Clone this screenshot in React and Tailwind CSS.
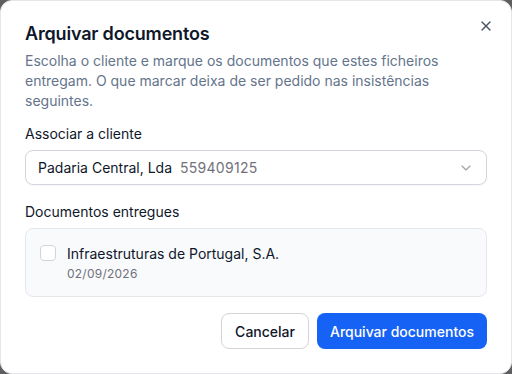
import { X, ChevronDown } from "lucide-react";

const App = () => {
  return (
    <div className="w-[512px] h-[374px] bg-[#5f5f5f] font-['Inter',sans-serif]">
      <div className="w-full h-full bg-white rounded-xl border border-[#e5e7eb] px-6 pt-[19px] relative">
        {/* Close */}
        <button className="absolute right-[17px] top-[17px] text-[#4b5563]">
          <X className="w-4 h-4" strokeWidth={2} />
        </button>

        {/* Header */}
        <h2 className="text-[18px] leading-7 font-semibold text-[#0f172a] tracking-[-0.01em]">
          Arquivar documentos
        </h2>
        <p className="mt-[3px] text-[14px] leading-[20px] text-[#64748b] pr-4">
          Escolha o cliente e marque os documentos que estes ficheiros entregam. O que marcar deixa de ser pedido nas insistências seguintes.
        </p>

        {/* Client */}
        <div className="mt-[13px]">
          <label className="block text-[14px] leading-5 text-[#0f172a]">Associar a cliente</label>
          <div className="mt-[6px] h-[35px] flex items-center justify-between rounded-lg border border-[#d4d4dc] px-3 shadow-[0_1px_2px_rgba(0,0,0,0.04)]">
            <div className="text-[14px] text-[#0f172a]">
              Padaria Central, Lda
              <span className="ml-2 text-[#71717a] tracking-[0.02em]">559409125</span>
            </div>
            <ChevronDown className="w-4 h-4 text-[#a1a1aa]" strokeWidth={1.75} />
          </div>
        </div>

        {/* Documents */}
        <div className="mt-[17px]">
          <label className="block text-[14px] leading-5 text-[#0f172a]">Documentos entregues</label>
          <div className="mt-[6px] h-[69px] rounded-lg border border-[#e5e7eb] bg-[#f8fafc] px-[14px] pt-[15px] flex gap-[11px]">
            <div className="mt-[1px] w-4 h-4 rounded-[4px] border border-[#d4d4d8] bg-white shrink-0" />
            <div>
              <div className="text-[14px] leading-5 text-[#0f172a]">Infraestruturas de Portugal, S.A.</div>
              <div className="text-[12px] leading-4 mt-[2px] text-[#71717a] tracking-[0.02em]">02/09/2026</div>
            </div>
          </div>
        </div>

        {/* Footer */}
        <div className="mt-4 flex justify-end gap-2">
          <button className="h-9 px-[13px] rounded-lg border border-[#d4d4d8] bg-white text-[14px] font-medium text-[#0f172a] whitespace-nowrap">
            Cancelar
          </button>
          <button className="h-9 px-[13px] rounded-lg bg-[#1662f5] text-[14px] font-medium text-white whitespace-nowrap">
            Arquivar documentos
          </button>
        </div>
      </div>
    </div>
  );
};

export default App;
